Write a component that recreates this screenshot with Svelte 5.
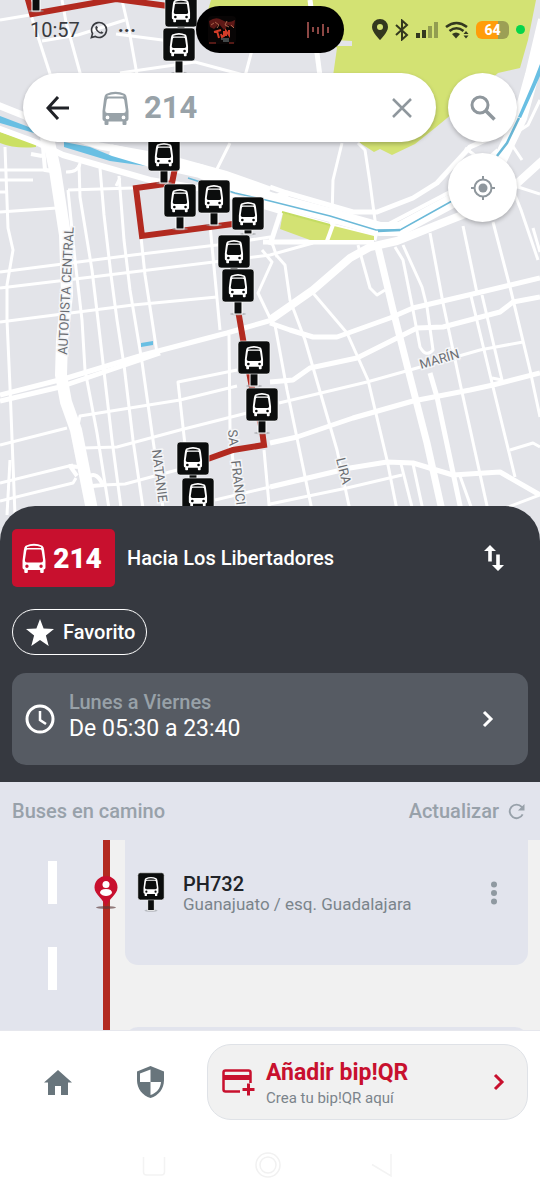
<script lang="ts">
  type Stop = { x: number; y: number; post: number };

  let query = $state("214");
  let favorite = $state(true);

  const route = {
    number: "214",
    direction: "Hacia Los Libertadores",
    days: "Lunes a Viernes",
    hours: "De 05:30 a 23:40",
  };

  const nextStop = { code: "PH732", address: "Guanajuato / esq. Guadalajara" };

  const stops: Stop[] = [
    { x: 20, y: -34, post: 12 },
    { x: 165, y: -6, post: 4 },
    { x: 163, y: 28, post: 12 },
    { x: 148, y: 138, post: 12 },
    { x: 198, y: 180, post: 12 },
    { x: 164, y: 184, post: 12 },
    { x: 232, y: 197, post: 4 },
    { x: 218, y: 235, post: 4 },
    { x: 222, y: 269, post: 12 },
    { x: 238, y: 341, post: 12 },
    { x: 246, y: 388, post: 12 },
    { x: 177, y: 442, post: 4 },
    { x: 182, y: 478, post: 12 },
  ];

  const minorRoads = [
    "M0 20 L30 15",
    "M42 41 L78 35 L125 20",
    "M30 12 L52 80",
    "M62 0 L66 22 L82 80",
    "M122 0 L129 30 L138 80",
    "M116 34 L170 41",
    "M120 73 L195 62 L262 80",
    "M252 50 L244 80",
    "M0 170 H52",
    "M0 180 H33",
    "M0 192 H6",
    "M0 212 L57 208",
    "M68 190 L133 188",
    "M0 272 L133 255 L217 245 L270 237 L277 257",
    "M0 288 L100 276 L270 255 L313 243",
    "M0 322 L133 305 L217 297",
    "M5 147 L8 228 L13 250 L7 285 L7 320 L10 387 L15 515",
    "M68 190 L75 260 L82 320 L85 370 L97 433 L110 515",
    "M79 165 L80 197 L92 270 L98 320 L105 380 L112 440 L122 515",
    "M100 168 L104 215 L111 275 L117 320 L124 365 L133 440 L144 515",
    "M119 176 L124 240 L130 290 L135 320 L142 362 L153 440 L164 515",
    "M141 237 L145 275 L152 320 L157 353",
    "M210 225 L220 330",
    "M229 335 L230 430 L238 515",
    "M80 163 Q79 172 66 172",
    "M120 178 L116 186",
    "M230 143 L213 177",
    "M77 430 L80 416 L180 400 L237 386",
    "M185 445 L178 382 L237 370",
    "M83 448 L117 447 L180 430 L247 413",
    "M0 445 L67 428",
    "M0 483 L73 465",
    "M0 501 L73 483 L76 478",
    "M103 485 L125 484 L177 470",
    "M10 460 L7 515",
    "M215 500 L270 487",
    "M264 450 L270 515",
    "M275 325 L287 390 L313 515",
    "M262 250 L272 262 L258 293 L270 318",
    "M277 256 L285 265 L290 300 L305 340 L337 450 L351 515",
    "M313 293 L347 333 L368 380 L387 460 L398 515",
    "M358 245 L370 288 L377 295 L385 290",
    "M395 247 L403 260 L413 310 L420 347 Q426 358 433 350 L427 307 L422 287 L403 245",
    "M430 233 L443 303 L460 383 L489 515",
    "M463 226 L477 293",
    "M471 296 L493 387 L515 477",
    "M493 222 L510 287 L530 370 L540 417",
    "M482 295 L502 380 L492 378",
    "M533 228 L540 252",
    "M279 403 L367 382 L417 368 L480 350 L485 349 L523 342",
    "M510 450 L533 443 L540 447",
    "M270 504 L347 488 L402 475",
    "M401 464 L414 515",
    "M413 464 L424 515",
    "M460 476 L474 515",
    "M500 510 L540 495",
    "M342 143 L333 180 L332 217 L327 240",
    "M358 143 L365 150 L370 183 L377 235",
    "M515 186 L540 194",
    "M515 195 L521 210 L538 260",
    "M465 148 L476 156",
    "M512 145 L522 160",
    "M540 100 L528 125 L505 140",
  ];

  const mainRoads = [
    "M0 395 L67 378 L143 355 L227 333 L272 320",
    "M0 401 L60 387 L160 353",
    "M265 200 L287 193 L353 212 L377 212 L413 198 L437 183 L470 147 L490 138",
    "M270 187 L287 193",
    "M287 193 L270 245",
    "M310 0 L320 76",
    "M270 323 L290 330 L313 337 L337 337 L390 318 L413 308 L477 293 L540 278",
    "M270 382 L293 380 L310 368 L357 358 L397 338 L417 328 L443 327 L500 312 L513 302 L540 297",
    "M270 443 L297 437 L353 418 L413 401 L470 390 L493 385 L540 373",
    "M270 487 L350 468 L387 462 L413 463 L453 475 L500 472 L540 495",
    "M430 373 L437 397 L462 515",
    "M263 242 L374 242",
  ];
</script>

{#snippet bus()}
  <path
    fill-rule="evenodd"
    d="M4 3Q13.5-1.5 23 3 24.5 4 25 8L26.500 20V28Q26.500 30 24.500 30V33Q24.500 34 23.500 34H21.500Q20.500 34 20.500 33V30.500H6.500V33Q6.500 34 5.500 34H3.500Q2.500 34 2.500 33V30Q.5 30 .5 28V20L2 8Q2.500 4 4 3ZM4.800 9L3.200 19.500Q3.200 22 5.500 22H21.500Q23.800 22 23.800 19.500L22.200 9Q22 7.500 20.500 7.500H6.500Q5 7.500 4.800 9ZM5.500 4.600V5.600H21.500V4.600Q13.500 1.500 5.500 4.600ZM5.500 24.500A1.900 1.900 0 1 0 5.500 28.300 1.900 1.900 0 1 0 5.500 24.500ZM21.500 24.500A1.900 1.900 0 1 0 21.500 28.300 1.900 1.900 0 1 0 21.500 24.500Z"
  />
{/snippet}

{#snippet stopSign(post: number)}
  <ellipse cx="16" cy={33 + post} rx="8" ry="1.500" fill="#9a9da0" opacity=".6" />
  <rect x="12" y="31" width="8" height={post + 2} fill="#0b0d0d" stroke="#fff" />
  <rect x="0" y="0" width="32" height="33" rx="3" fill="#0b0d0d" stroke="#fff" stroke-width=".6" />
  <g transform="translate(6.500 4.500) scale(.7)" fill="#fff">{@render bus()}</g>
{/snippet}

{#snippet chevron()}
  <svg class="chevron" viewBox="0 0 12 18" width="12" height="18" aria-hidden="true">
    <path d="M2 2l7 7-7 7" fill="none" stroke="currentColor" stroke-width="3" />
  </svg>
{/snippet}

<div class="screen">
  <section class="map">
    <svg class="canvas" viewBox="0 0 540 546" preserveAspectRatio="xMidYMin slice" aria-hidden="true">
      <rect width="540" height="546" fill="#e3e4e9" />
      <g fill="#d3e273">
        <path d="M211 0L205 20L314 20L337 48L333 76L340 130L374 152L380 149L392 155L415 144L435 128L452 114L498 73L520 68L528 40L536 0Z" />
        <path d="M0 132L36 144V147Q15 149 0 143Z" fill="#cbe063" />
      </g>
      <path d="M334 40L352 41V46L334 46Z" fill="#e3e4e9" />
      <g fill="none" stroke="#fff" stroke-linejoin="round">
        <g stroke-width="3">
          {#each minorRoads as d}
            <path {d} />
          {/each}
        </g>
        <g stroke-width="5">
          {#each mainRoads as d}
            <path {d} />
          {/each}
        </g>
        <path d="M270 320L313 290L350 258L370 247L397 241L437 225L480 208L512 188L545 158" stroke-width="8" />
        <path d="M377 243L393 310L410 377L427 443L443 515" stroke-width="7" />
        <path d="M-5 104L25 116L45 128L100 146L167 158L225 174L270 190" stroke-width="7" />
        <path d="M-5 127L38 143L63 155L150 180L210 190L270 208L330 226L377 238" stroke-width="6" />
        <path d="M110 151L200 171L270 199L330 215L380 229L400 229L452 201L500 160L520 118L532 75L545 20" stroke-width="14" />
        <path d="M385 226L450 192L498 150" stroke-width="4" />
        <path d="M46 128L55 170L65 235L67 295L62 340L61 375L66 402L76 430L94 520" stroke-width="12" />
        <path d="M42 135L45 170L58 172M31 154L42 156" stroke-width="4" />
        <path d="M78 467L70 466L77 476M90 476Q97 472 103 485L92 486" stroke-width="4" />
      </g>
      <path d="M283 213L330 225L374 236V240H310L280 229Z" fill="#d3e273" />
      <path d="M334 222L327 241" stroke="#fff" stroke-width="4" />
      <g fill="#69bfe3">
        <path d="M0 116L34 129V133L0 123Z" />
        <path d="M64 142L90 147L112 156L146 166L110 161L64 147Z" />
        <path d="M141 343L153 341V345L141 347Z" />
        <path d="M540 64L533 82L518 117L521 118L540 76Z" />
      </g>
      <g fill="none" stroke="#6bb9d8" stroke-width="1.500">
        <path d="M188 178L235 193L270 201L330 216L376 230L400 230L452 201" />
        <path d="M519 118L507 143L497 156" stroke-width="2.500" />
        <path d="M378 231L400 230" stroke-width="2.500" />
      </g>
      <path d="M282 212L330 225" stroke="#c4dc63" stroke-width="2" />

      <g fill="none" stroke="#b22a20" stroke-width="6" stroke-linejoin="miter">
        <path d="M27 -4L32 14L116 -1L168 6" />
        <path d="M175 168L172 183L136 188L142 236L248 222" />
        <path d="M238 310L244 345L252 388L262 430L264 445L233 450L205 460" />
      </g>

      <g class="labels">
        <text transform="translate(67 355) rotate(-87)">AUTOPISTA CENTRAL</text>
        <text transform="translate(421 369) rotate(-16)">MARÍN</text>
        <text transform="translate(336 459) rotate(76)">LIRA</text>
        <text transform="translate(152 450) rotate(83)">NATANIE</text>
        <text transform="translate(228 430) rotate(85)">SA</text>
        <text transform="translate(231 461) rotate(83)">FRANCI</text>
      </g>

      {#each stops as stop}
        <g transform="translate({stop.x} {stop.y})">{@render stopSign(stop.post)}</g>
      {/each}
    </svg>

    <header class="status">
      <div class="status-left">
        <span>10:57</span>
        <svg viewBox="0 0 20 20" width="18" height="18" fill="none" stroke="#393b40" aria-hidden="true">
          <path d="M1.500 18.500L2.800 14A8.300 8.300 0 1 1 6 17.200Z" stroke-width="1.800" />
          <path d="M7.200 5.200C5 6.800 6 9.800 8.200 12s5.200 3.200 6.800 1l-2.300-1.600-1.200 1C9.800 11.800 8.300 10.300 7.900 8.700l1-1.100Z" fill="#393b40" stroke="none" />
        </svg>
        <span class="more">···</span>
      </div>
      <div class="island">
        <svg viewBox="0 0 28 28" width="28" height="28" aria-hidden="true">
          <rect width="28" height="28" rx="4" fill="#080505" />
          <path d="M1 5Q8 0 14 4T27 4L26 12 20 9 16 14 11 8 6 13 2 11Z" fill="#5e1816" />
          <path d="M7 6l4 3-2 3M19 5l-2 4 4 2M3 9l3-2M23 9l3 3" stroke="#a8644a" fill="none" />
          <path d="M6 16l7-2M9 15l2 7M13 18l1 3 2-1V15M18 20v-5l3 4v-5" stroke="#d23c28" stroke-width="2" fill="none" />
          <path d="M13 23h8M15 25h6" stroke="#7d8b8e" />
          <path d="M1 27h7M21 27h5" stroke="#a03028" />
        </svg>
        <svg viewBox="0 0 24 18" width="24" height="18" stroke="#8c4744" stroke-width="2" aria-hidden="true">
          <path d="M2 1v16M7 6v5M12 6v7M17 3v12M22 6v6" />
        </svg>
      </div>
      <div class="status-right">
        <svg viewBox="0 0 16 22" width="16" height="22" aria-hidden="true">
          <path fill-rule="evenodd" d="M8 0a8 8 0 0 0-8 8c0 5.500 8 13 8 13s8-7.500 8-13a8 8 0 0 0-8-8Zm0 5a3 3 0 1 1 0 6 3 3 0 0 1 0-6Z" fill="#33381f" />
        </svg>
        <svg viewBox="0 0 14 22" width="14" height="22" fill="none" stroke="#33381f" stroke-width="2" aria-hidden="true">
          <path d="M1 6l11 10-5 4.500V1.500L12 6 1 16" />
        </svg>
        <svg viewBox="0 0 22 20" width="22" height="20" fill="#33381f" aria-hidden="true">
          <path d="M0 13h4v5H0ZM6 10h4v8H6Z" />
          <path d="M12 6h4v12h-4ZM18 2h4v16h-4Z" opacity=".4" />
        </svg>
        <svg viewBox="0 0 24 20" width="24" height="20" fill="none" stroke="#33381f" stroke-width="2.600" aria-hidden="true">
          <path d="M1 7q10.500-8 21 0M4.500 11q7-5.500 14 0" />
          <path d="M7 14q4-3 8 0l-4 4.500Z" fill="#33381f" stroke="none" />
          <path d="M18.500 14l2.500-3 2.500 3ZM18.500 15.500l2.500 3 2.500-3Z" fill="#33381f" stroke="none" />
        </svg>
        <span class="battery">64</span>
        <span class="dot"></span>
      </div>
    </header>

    <div class="search-row">
      <form class="search" onsubmit={(e) => e.preventDefault()}>
        <button type="button" class="icon-btn back" aria-label="Volver">
          <svg viewBox="0 0 24 24" width="24" height="24" fill="none" stroke="#202227" stroke-width="3">
            <path d="M23 12H2M12 1L2 12l10 11" />
          </svg>
        </button>
        <svg viewBox="0 0 27 34" width="27" height="34" fill="#98a2a8" aria-hidden="true">{@render bus()}</svg>
        <input type="text" aria-label="Recorrido" bind:value={query} />
        <button type="button" class="icon-btn" aria-label="Borrar" onclick={() => (query = "")}>
          <svg viewBox="0 0 20 20" width="20" height="20" stroke="#8f979d" stroke-width="2.500">
            <path d="M1 1l18 18M19 1L1 19" />
          </svg>
        </button>
      </form>
      <button class="round" aria-label="Buscar">
        <svg viewBox="0 0 26 26" width="26" height="26" fill="none" stroke="#8f979d" stroke-width="3">
          <circle cx="10" cy="10" r="8" />
          <path d="M16 16l8.500 8.500" stroke-width="3.500" />
        </svg>
      </button>
    </div>
    <button class="round locate" aria-label="Mi ubicación">
      <svg viewBox="0 0 24 24" width="24" height="24" fill="none" stroke="#8f979d" stroke-width="2">
        <circle cx="12" cy="12" r="8.500" />
        <circle cx="12" cy="12" r="4.500" fill="#8f979d" stroke="none" />
        <path d="M12 0v4M12 20v4M0 12h4M20 12h4" />
      </svg>
    </button>
  </section>

  <section class="sheet">
    <div class="route-row">
      <span class="route-badge">
        <svg viewBox="0 0 27 34" width="24" height="30" fill="#fff" aria-hidden="true">{@render bus()}</svg>
        {route.number}
      </span>
      <h1>{route.direction}</h1>
      <button class="icon-btn swap" aria-label="Cambiar sentido">
        <svg viewBox="0 0 20 26" width="20" height="26" fill="#fff">
          <path d="M6 0l6 6H7.800v10.500H4.200V6H0ZM14 26l-6-6h4.200V9.500h3.600V20H20Z" />
        </svg>
      </button>
    </div>

    <button class="favorite" aria-pressed={favorite} onclick={() => (favorite = !favorite)}>
      <svg viewBox="0 0 28 27" width="28" height="27" aria-hidden="true">
        <path
          d="M14 0l3.600 9.600L28 10l-8.100 6.500L22.700 27 14 21 5.300 27l2.800-10.500L0 10l10.400-.4Z"
          fill={favorite ? "#fff" : "none"}
          stroke={favorite ? "none" : "#fff"}
        />
      </svg>
      Favorito
    </button>

    <button class="schedule">
      <svg viewBox="0 0 30 30" width="30" height="30" fill="none" stroke="#fff" aria-hidden="true">
        <circle cx="15" cy="15" r="13" stroke-width="3" />
        <path d="M15 7v9l6 4" stroke-width="2.500" />
      </svg>
      <span class="schedule-text">
        <span class="days">{route.days}</span>
        <span class="hours">{route.hours}</span>
      </span>
      {@render chevron()}
    </button>
  </section>

  <section class="buses">
    <div class="buses-head">
      <h2>Buses en camino</h2>
      <button class="refresh">
        Actualizar
        <svg viewBox="0 0 18 18" width="17" height="17" fill="none" stroke="currentColor" stroke-width="2" aria-hidden="true">
          <path d="M15.500 12A7.200 7.200 0 1 1 14.500 4.200L16 6" />
          <path d="M17.500 1v7h-7Z" fill="currentColor" stroke="none" />
        </svg>
      </button>
    </div>
    <div class="track">
      <div class="lane"></div>
      <div class="line">
        <svg class="pin" viewBox="0 0 24 34" width="24" height="34" aria-hidden="true">
          <ellipse cx="12" cy="31.500" rx="10" ry="1.500" fill="#5c3a3a" opacity=".65" />
          <path d="M12 0A11.500 11.500 0 0 0 .5 11.500C.5 19 10 23 12 31c2-8 11.500-12 11.500-19.500A11.500 11.500 0 0 0 12 0Z" fill="#c8102e" />
          <circle cx="12" cy="8.500" r="3.500" fill="#fff" />
          <path d="M6 17q0-4 6-4t6 4q-2 3-6 3t-6-3Z" fill="#fff" />
        </svg>
      </div>
      <div class="cards">
        <article class="stop">
          <svg viewBox="-1 -1 34 50" width="28" height="41" aria-hidden="true">{@render stopSign(13)}</svg>
          <div class="stop-text">
            <h3>{nextStop.code}</h3>
            <p>{nextStop.address}</p>
          </div>
          <button class="icon-btn" aria-label="Más opciones">
            <svg viewBox="0 0 8 24" width="8" height="24" fill="#8f99a1">
              <circle cx="4" cy="3.500" r="3" />
              <circle cx="4" cy="12" r="3" />
              <circle cx="4" cy="20.500" r="3" />
            </svg>
          </button>
        </article>
        <article class="stop following"></article>
      </div>
    </div>
  </section>

  <footer>
    <nav>
      <a href="#inicio" class="tab" aria-label="Inicio">
        <svg viewBox="0 0 28 25" width="28" height="25" fill="#68757c">
          <path d="M14 0L28 12.500H24V25H17V16H11V25H4V12.500H0Z" />
        </svg>
      </a>
      <a href="#seguridad" class="tab" aria-label="Seguridad">
        <svg viewBox="0 0 27 32" width="27" height="32">
          <path d="M13.500 0L27 5.500V14C27 23 21.500 29.500 13.500 32 5.500 29.500 0 23 0 14V5.500Z" fill="#68757c" />
          <path d="M13.500 3.500V16H3V7.500ZM13.500 16H24C23.500 22.500 19.500 27 13.500 29Z" fill="#fff" />
        </svg>
      </a>
      <a href="#bip" class="bip">
        <svg viewBox="0 0 33 28" width="33" height="28" fill="none" stroke="#c8102e" stroke-width="2.500" aria-hidden="true">
          <path d="M18 23.500H3.500Q1.500 23.500 1.500 21.500V4.500Q1.500 2.500 3.500 2.500H26.500Q28.500 2.500 28.500 4.500V15" />
          <path d="M1.500 9.500H28.500" stroke-width="5" />
          <path d="M26.500 15.500V27.500M20.500 21.500H32.500" stroke-width="3" />
        </svg>
        <span class="bip-text">
          <strong>Añadir bip!QR</strong>
          <small>Crea tu bip!QR aquí</small>
        </span>
        {@render chevron()}
      </a>
    </nav>
    <div class="system">
      <svg viewBox="0 0 26 26" width="26" height="26" fill="none" stroke="#f3f3f3" stroke-width="1.500">
        <path d="M2.500 5V20Q2.500 23 5.500 23H20.500Q23.500 23 23.500 20V5" />
      </svg>
      <svg viewBox="0 0 26 26" width="26" height="26" fill="none" stroke="#f1f1f1" stroke-width="1.500">
        <circle cx="13" cy="13" r="12" />
        <circle cx="13" cy="13" r="8" />
      </svg>
      <svg viewBox="0 0 26 26" width="26" height="26" fill="none" stroke="#f3f3f3" stroke-width="1.500">
        <path d="M22 2V24L3 12.500" />
      </svg>
    </div>
  </footer>
</div>

<style>
  :global(body) {
    background: #fff;
    font-family: Roboto, "Liberation Sans", sans-serif;
  }

  .screen {
    display: flex;
    flex-direction: column;
    min-height: 100vh;
  }

  h1,
  h2,
  h3,
  p {
    margin: 0;
  }

  button {
    font: inherit;
    color: inherit;
    border: none;
    background: none;
    padding: 0;
    cursor: pointer;
  }

  svg {
    display: block;
    flex: none;
  }

  .icon-btn {
    display: flex;
    align-items: center;
    justify-content: center;
  }

  .map {
    position: relative;
    flex: 1;
    min-height: 300px;
    display: flex;
    flex-direction: column;
  }

  .canvas {
    position: absolute;
    top: 0;
    left: 0;
    width: 100%;
    height: calc(100% + 40px);
  }

  .labels text {
    font-size: 13px;
    fill: #6b6e73;
    stroke: #f4f5f7;
    stroke-width: 3px;
    paint-order: stroke;
  }

  .status {
    position: relative;
    display: grid;
    grid-template-columns: 1fr auto 1fr;
    align-items: center;
    padding: 6px 15px 0;
    margin-bottom: 20px;
  }

  .status-left {
    display: flex;
    align-items: center;
    gap: 10px;
    padding-left: 15px;
    font-size: 20px;
    color: #393b40;
  }

  .more {
    font-weight: 700;
  }

  .island {
    display: flex;
    align-items: center;
    justify-content: space-between;
    width: 148px;
    height: 47px;
    box-sizing: border-box;
    padding: 0 14px 0 12px;
    border-radius: 24px;
    background: #000;
  }

  .status-right {
    display: flex;
    align-items: center;
    justify-content: flex-end;
    gap: 7px;
  }

  .battery {
    width: 33px;
    border-radius: 6px;
    background: linear-gradient(90deg, #ff9d0a 66%, #9c9f55 66%);
    color: #fff;
    font-size: 14px;
    line-height: 18px;
    font-weight: 800;
    text-align: center;
  }

  .dot {
    width: 9px;
    height: 9px;
    border-radius: 50%;
    background: #05d54b;
  }

  .search-row {
    position: relative;
    display: flex;
    gap: 12px;
    padding: 0 23px;
  }

  .search {
    flex: 1;
    min-width: 0;
    display: flex;
    align-items: center;
    padding: 0 24px 0 23px;
    border-radius: 35px;
    background: #fff;
    box-shadow: 0 2px 4px rgba(0, 0, 0, 0.25);
  }

  .back {
    margin-right: 32px;
  }

  .search input {
    flex: 1;
    min-width: 0;
    margin-left: 15px;
    padding: 0;
    border: none;
    outline: none;
    background: none;
    color: #98a2a8;
    font-family: inherit;
    font-size: 31px;
    font-weight: 700;
  }

  .round {
    flex: none;
    display: flex;
    align-items: center;
    justify-content: center;
    width: 69px;
    height: 69px;
    border-radius: 50%;
    background: #fff;
    box-shadow: 0 2px 4px rgba(0, 0, 0, 0.25);
  }

  .locate {
    position: relative;
    align-self: flex-end;
    margin: 11px 23px 0 0;
  }

  .sheet {
    position: relative;
    display: flex;
    flex-direction: column;
    padding: 23px 12px 17px;
    border-radius: 35px 35px 0 0;
    background: #363940;
    color: #fff;
  }

  .route-row {
    display: flex;
    align-items: center;
    gap: 12px;
  }

  .route-badge {
    display: flex;
    align-items: center;
    justify-content: center;
    gap: 7px;
    width: 103px;
    height: 58px;
    box-sizing: border-box;
    padding-right: 3px;
    border-radius: 5px;
    background: #c8102e;
    font-size: 28px;
    font-weight: 900;
  }

  h1 {
    flex: 1;
    font-size: 20px;
    font-weight: 500;
  }

  .swap {
    padding: 12px 24px;
  }

  .favorite {
    align-self: flex-start;
    display: flex;
    align-items: center;
    gap: 9px;
    height: 46px;
    margin: 22px 0 18px;
    padding: 0 11px 0 13px;
    border: 1px solid #fff;
    border-radius: 23px;
    font-size: 20px;
    font-weight: 500;
  }

  .schedule {
    display: flex;
    align-items: center;
    padding: 16px 34px 16px 13px;
    border-radius: 14px;
    background: #565b63;
    text-align: left;
  }

  .schedule-text {
    flex: 1;
    display: flex;
    flex-direction: column;
    padding: 0 0 6px 14px;
  }

  .days {
    font-size: 20px;
    line-height: 26px;
    font-weight: 500;
    color: #98a1a8;
  }

  .hours {
    font-size: 23px;
    line-height: 28px;
  }

  .buses {
    background: #e2e4ed;
    border-bottom: 1px solid #e6e7ed;
  }

  .buses-head {
    display: flex;
    align-items: center;
    justify-content: space-between;
    height: 58px;
    padding: 0 15px 0 12px;
    color: #98a1aa;
  }

  h2,
  .refresh {
    font-size: 20px;
    font-weight: 500;
  }

  .refresh {
    display: flex;
    align-items: center;
    gap: 9px;
  }

  .track {
    display: flex;
    height: 190px;
    overflow: hidden;
    background: #f1f1f1;
  }

  .lane {
    flex: none;
    width: 103px;
    background: repeating-linear-gradient(#fff 0 43px, #e2e4ed 43px 86px) 48px 21px / 9px 172px no-repeat #e2e4ed;
  }

  .line {
    position: relative;
    flex: none;
    width: 7px;
    background: #b22a20;
  }

  .pin {
    position: absolute;
    top: 36px;
    left: -9px;
  }

  .cards {
    flex: 1;
    min-width: 0;
    display: flex;
    flex-direction: column;
    gap: 62px;
    padding: 0 12px 0 15px;
  }

  .stop {
    flex: none;
    display: flex;
    align-items: center;
    padding: 32px 30px 52px 12px;
    border-radius: 0 0 13px 13px;
    background: #e2e4ed;
  }

  .following {
    border-radius: 13px 13px 0 0;
  }

  .stop-text {
    flex: 1;
    min-width: 0;
    margin-left: 18px;
  }

  h3 {
    font-size: 20px;
    line-height: 22px;
    font-weight: 500;
    color: #202328;
  }

  .stop-text p {
    font-size: 17px;
    line-height: 18px;
    color: #7b848b;
  }

  nav {
    display: flex;
    padding: 13px 12px 10px;
  }

  .tab {
    flex: none;
    display: flex;
    align-items: center;
    justify-content: center;
    width: 92px;
  }

  .bip {
    flex: 1;
    min-width: 0;
    display: flex;
    align-items: center;
    height: 76px;
    box-sizing: border-box;
    margin-left: 11px;
    padding: 0 22px 0 14px;
    border: 1px solid #dfe2e7;
    border-radius: 24px;
    background: #f1f1f1;
    color: #c8102e;
    text-decoration: none;
  }

  .bip-text {
    flex: 1;
    display: flex;
    flex-direction: column;
    padding: 4px 0 0 11px;
  }

  .bip-text strong {
    font-size: 23px;
    line-height: 28px;
  }

  .bip-text small {
    font-size: 15px;
    line-height: 22px;
    color: #7b848b;
  }

  .system {
    display: flex;
    align-items: center;
    justify-content: center;
    gap: 88px;
    height: 70px;
    padding-right: 4px;
  }
</style>
